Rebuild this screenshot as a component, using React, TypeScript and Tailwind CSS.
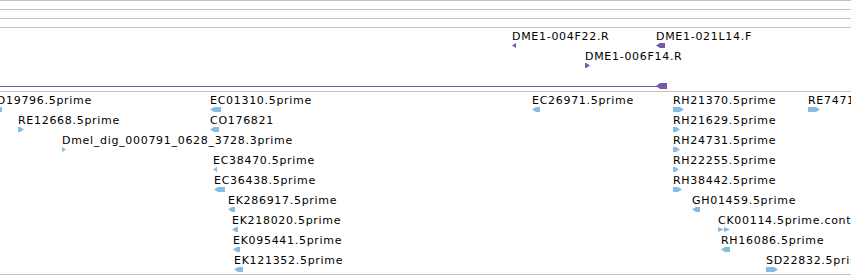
type Dir = "left" | "right" | "double";

type Feat = {
  label?: string;
  x: number; // label left
  t: number; // cap top of label, page coords
  gx: number; // glyph left
  gw: number; // glyph width
  dir: Dir;
};

const BLUE = "#86bbe2";
const PURPLE = "#7a58a8";

// purple track (clone ends)
const cloneFeats: Feat[] = [
  { label: "DME1-004F22.R", x: 512, t: 32, gx: 512, gw: 4, dir: "left" },
  { label: "DME1-021L14.F", x: 656, t: 32, gx: 656, gw: 9, dir: "left" },
  { label: "DME1-006F14.R", x: 585, t: 52, gx: 585, gw: 5, dir: "right" },
];

// blue track (ESTs)
const estFeats: Feat[] = [
  { label: "LD19796.5prime", x: -10, t: 96, gx: -4, gw: 6, dir: "left" },
  { label: "EC01310.5prime", x: 210, t: 96, gx: 210, gw: 11, dir: "left" },
  { label: "EC26971.5prime", x: 532, t: 96, gx: 532, gw: 8, dir: "left" },
  { label: "RH21370.5prime", x: 673, t: 96, gx: 673, gw: 11, dir: "right" },
  { label: "RE74712.5prime", x: 808, t: 96, gx: 808, gw: 12, dir: "right" },
  { label: "RE12668.5prime", x: 18, t: 116, gx: 18, gw: 6, dir: "right" },
  { label: "CO176821", x: 210, t: 116, gx: 210, gw: 9, dir: "left" },
  { label: "RH21629.5prime", x: 673, t: 116, gx: 673, gw: 7, dir: "right" },
  { label: "Dmel_dig_000791_0628_3728.3prime", x: 62, t: 136, gx: 62, gw: 4, dir: "right" },
  { label: "RH24731.5prime", x: 673, t: 136, gx: 673, gw: 7, dir: "right" },
  { label: "EC38470.5prime", x: 213, t: 156, gx: 213, gw: 4, dir: "left" },
  { label: "RH22255.5prime", x: 673, t: 156, gx: 673, gw: 6, dir: "right" },
  { label: "EC36438.5prime", x: 214, t: 176, gx: 214, gw: 11, dir: "left" },
  { label: "RH38442.5prime", x: 673, t: 176, gx: 673, gw: 9, dir: "right" },
  { label: "EK286917.5prime", x: 228, t: 196, gx: 228, gw: 7, dir: "left" },
  { label: "GH01459.5prime", x: 692, t: 196, gx: 692, gw: 8, dir: "left" },
  { label: "EK218020.5prime", x: 232, t: 216, gx: 232, gw: 6, dir: "left" },
  { label: "CK00114.5prime.contig1", x: 718, t: 216, gx: 718, gw: 12, dir: "double" },
  { label: "EK095441.5prime", x: 233, t: 236, gx: 233, gw: 7, dir: "left" },
  { label: "RH16086.5prime", x: 721, t: 236, gx: 721, gw: 9, dir: "left" },
  { label: "EK121352.5prime", x: 234, t: 256, gx: 234, gw: 9, dir: "left" },
  { label: "SD22832.5prime", x: 766, t: 256, gx: 766, gw: 12, dir: "right" },
];

function Glyph({ w, h, dir, color }: { w: number; h: number; dir: Dir; color: string }) {
  const tip = Math.min(4, w);
  const m = h / 2;
  let pts = "";
  if (dir === "left") pts = `0,${m} ${tip},0 ${w},0 ${w},${h} ${tip},${h}`;
  if (dir === "right") pts = `0,0 ${w - tip},0 ${w},${m} ${w - tip},${h} 0,${h}`;
  if (dir === "double") {
    const hw = w / 2;
    return (
      <svg width={w} height={h} className="block">
        <polygon points={`0,0 ${hw},${m} 0,${h}`} fill={color} />
        <polygon points={`${hw},0 ${w},${m} ${hw},${h}`} fill={color} />
      </svg>
    );
  }
  return (
    <svg width={w} height={h} className="block">
      <polygon points={pts} fill={color} />
    </svg>
  );
}

// one feature on the track canvas: label with its glyph 11px below the cap top
function Feature({ f, top, color }: { f: Feat; top: number; color: string }) {
  return (
    <>
      {f.label && (
        <span
          className="absolute whitespace-nowrap text-[11px] leading-[13px] tracking-[0.7px] text-black"
          style={{ left: f.x, top: f.t - 2 - top }}
        >
          {f.label}
        </span>
      )}
      <div className="absolute" style={{ left: f.gx, top: f.t + 11 - top }}>
        <Glyph w={f.gw} h={5} dir={f.dir} color={color} />
      </div>
    </>
  );
}

export default function App() {
  return (
    <div className="flex flex-col w-[851px] h-[275px] overflow-hidden bg-white font-['DejaVu_Sans',sans-serif]">
      {/* ruler rows */}
      <div className="h-[9px] shrink-0 border-t border-[#c4c4c4]" />
      <div className="h-[9px] shrink-0 border-t border-[#c4c4c4]" />
      <div className="h-[9px] shrink-0 border-t border-[#c4c4c4]" />

      {/* clone end track */}
      <div className="relative h-[64px] shrink-0 border-t border-[#c4c4c4]">
        {cloneFeats.map((f) => (
          <Feature key={f.label} f={f} top={28} color={PURPLE} />
        ))}
        {/* long clone running off to the left */}
        <div className="absolute left-0 top-[58px] h-px w-[658px]" style={{ backgroundColor: PURPLE }} />
        <div className="absolute left-[656px] top-[55px]">
          <Glyph w={11} h={6} dir="left" color={PURPLE} />
        </div>
      </div>

      {/* EST track */}
      <div className="relative h-[184px] shrink-0 border-y border-[#c4c4c4]">
        {estFeats.map((f) => (
          <Feature key={f.label} f={f} top={92} color={BLUE} />
        ))}
      </div>
    </div>
  );
}
